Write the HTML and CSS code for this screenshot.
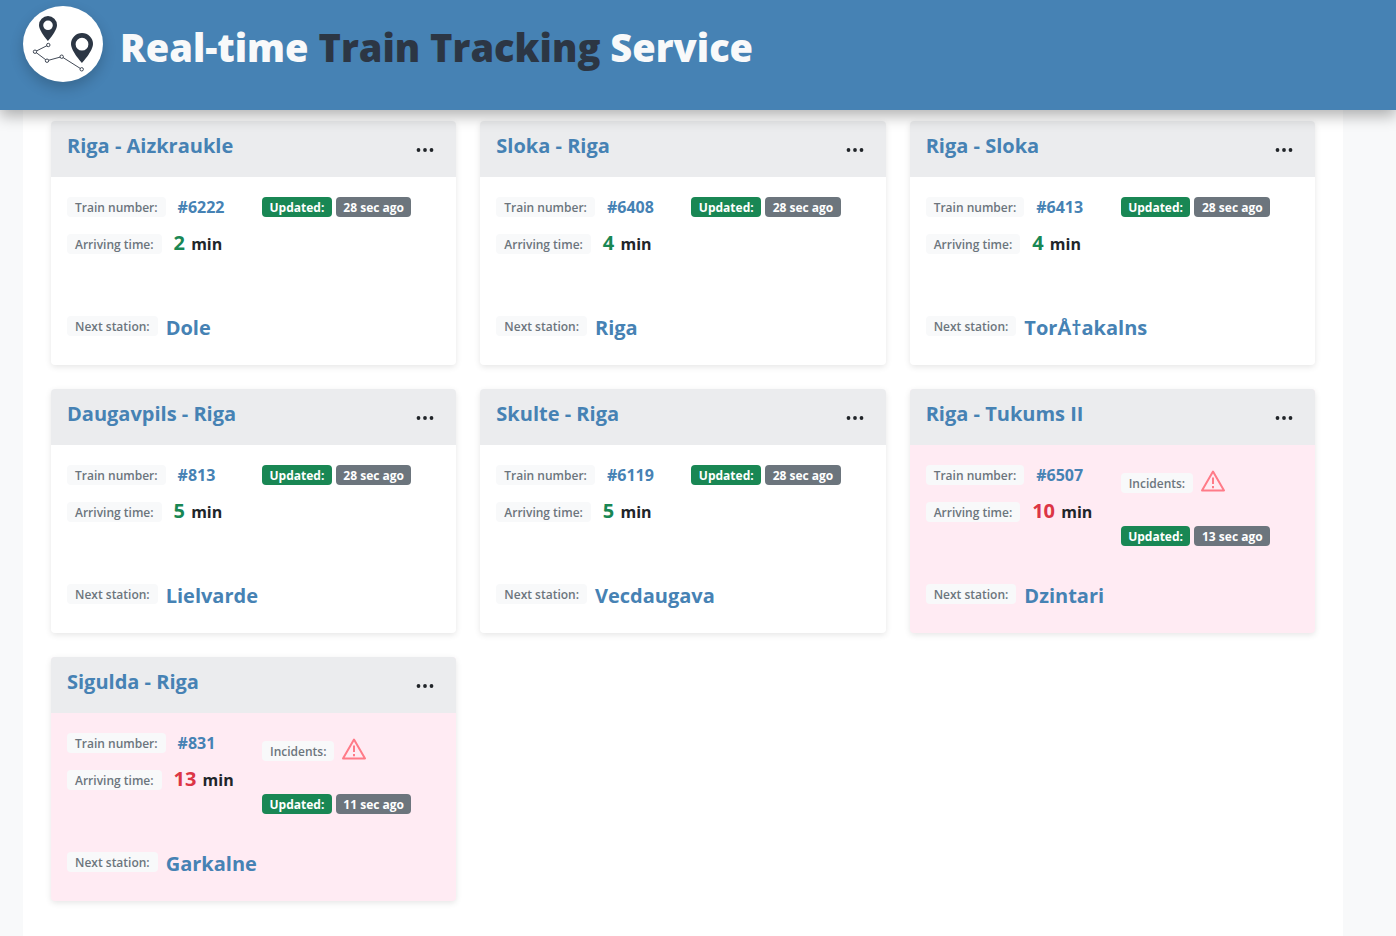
FILE: index.html
```html
<!DOCTYPE html>
<html lang="en">
<head>
    <meta charset="UTF-8">
    <meta name="viewport" content="width=device-width, initial-scale=1.0">
    <title>Real-time Train Tracking Service</title>
    <link rel="stylesheet" href="styles.css">
</head>
<body>

<header class="site-header">
    <div class="logo">
        <svg width="80" height="76" viewBox="0 0 80 76">
            <path class="pin" fill-rule="evenodd" d="M25 10a9 9 0 0 0-9 9c0 6 9 16 9 16s9-10 9-16a9 9 0 0 0-9-9zm0 4.500a4.800 4.800 0 1 1 0 9.600a4.800 4.800 0 0 1 0-9.600z"/>
            <path class="pin" fill-rule="evenodd" d="M59 27a11 11 0 0 0-11 11c0 7 11 19 11 19s11-12 11-19a11 11 0 0 0-11-11zm0 4.800a6.400 6.400 0 1 1 0 12.800a6.400 6.400 0 0 1 0-12.800z"/>
            <polyline class="route" points="25.300,39 12,45.700 24,54.700 38.700,50.700 58.700,63.300"/>
            <circle class="node" cx="25.300" cy="39" r="1.700"/>
            <circle class="node" cx="12" cy="45.700" r="1.700"/>
            <circle class="node" cx="24" cy="54.700" r="1.700"/>
            <circle class="node" cx="38.700" cy="50.700" r="1.700"/>
            <circle class="node" cx="58.700" cy="63.300" r="1.700"/>
        </svg>
    </div>
    <h1 class="site-title">Real-time <span class="title-dark">Train Tracking</span> Service</h1>
</header>

<main class="container">
    <div class="card-grid">

        <section class="card">
            <div class="card-head">
                <h2>Riga - Aizkraukle</h2>
                <svg class="dots" width="18" height="6" viewBox="0 0 18 6"><circle cx="2.500" cy="3" r="1.900"/><circle cx="9" cy="3" r="1.900"/><circle cx="15.500" cy="3" r="1.900"/></svg>
            </div>
            <div class="card-body">
                <div class="info">
                    <div class="info-left">
                        <div class="row"><span class="chip">Train number:</span><span class="train-no">#6222</span></div>
                        <div class="row"><span class="chip">Arriving time:</span><span class="eta"><b class="soon">2</b> min</span></div>
                    </div>
                    <div class="info-right">
                        <div class="updated"><span class="badge green">Updated:</span><span class="badge gray">28 sec ago</span></div>
                    </div>
                </div>
                <div class="next"><span class="chip">Next station:</span><span class="station">Dole</span></div>
            </div>
        </section>

        <section class="card">
            <div class="card-head">
                <h2>Sloka - Riga</h2>
                <svg class="dots" width="18" height="6" viewBox="0 0 18 6"><circle cx="2.500" cy="3" r="1.900"/><circle cx="9" cy="3" r="1.900"/><circle cx="15.500" cy="3" r="1.900"/></svg>
            </div>
            <div class="card-body">
                <div class="info">
                    <div class="info-left">
                        <div class="row"><span class="chip">Train number:</span><span class="train-no">#6408</span></div>
                        <div class="row"><span class="chip">Arriving time:</span><span class="eta"><b class="soon">4</b> min</span></div>
                    </div>
                    <div class="info-right">
                        <div class="updated"><span class="badge green">Updated:</span><span class="badge gray">28 sec ago</span></div>
                    </div>
                </div>
                <div class="next"><span class="chip">Next station:</span><span class="station">Riga</span></div>
            </div>
        </section>

        <section class="card">
            <div class="card-head">
                <h2>Riga - Sloka</h2>
                <svg class="dots" width="18" height="6" viewBox="0 0 18 6"><circle cx="2.500" cy="3" r="1.900"/><circle cx="9" cy="3" r="1.900"/><circle cx="15.500" cy="3" r="1.900"/></svg>
            </div>
            <div class="card-body">
                <div class="info">
                    <div class="info-left">
                        <div class="row"><span class="chip">Train number:</span><span class="train-no">#6413</span></div>
                        <div class="row"><span class="chip">Arriving time:</span><span class="eta"><b class="soon">4</b> min</span></div>
                    </div>
                    <div class="info-right">
                        <div class="updated"><span class="badge green">Updated:</span><span class="badge gray">28 sec ago</span></div>
                    </div>
                </div>
                <div class="next"><span class="chip">Next station:</span><span class="station">TorÅ†akalns</span></div>
            </div>
        </section>

        <section class="card">
            <div class="card-head">
                <h2>Daugavpils - Riga</h2>
                <svg class="dots" width="18" height="6" viewBox="0 0 18 6"><circle cx="2.500" cy="3" r="1.900"/><circle cx="9" cy="3" r="1.900"/><circle cx="15.500" cy="3" r="1.900"/></svg>
            </div>
            <div class="card-body">
                <div class="info">
                    <div class="info-left">
                        <div class="row"><span class="chip">Train number:</span><span class="train-no">#813</span></div>
                        <div class="row"><span class="chip">Arriving time:</span><span class="eta"><b class="soon">5</b> min</span></div>
                    </div>
                    <div class="info-right">
                        <div class="updated"><span class="badge green">Updated:</span><span class="badge gray">28 sec ago</span></div>
                    </div>
                </div>
                <div class="next"><span class="chip">Next station:</span><span class="station">Lielvarde</span></div>
            </div>
        </section>

        <section class="card">
            <div class="card-head">
                <h2>Skulte - Riga</h2>
                <svg class="dots" width="18" height="6" viewBox="0 0 18 6"><circle cx="2.500" cy="3" r="1.900"/><circle cx="9" cy="3" r="1.900"/><circle cx="15.500" cy="3" r="1.900"/></svg>
            </div>
            <div class="card-body">
                <div class="info">
                    <div class="info-left">
                        <div class="row"><span class="chip">Train number:</span><span class="train-no">#6119</span></div>
                        <div class="row"><span class="chip">Arriving time:</span><span class="eta"><b class="soon">5</b> min</span></div>
                    </div>
                    <div class="info-right">
                        <div class="updated"><span class="badge green">Updated:</span><span class="badge gray">28 sec ago</span></div>
                    </div>
                </div>
                <div class="next"><span class="chip">Next station:</span><span class="station">Vecdaugava</span></div>
            </div>
        </section>

        <section class="card incident">
            <div class="card-head">
                <h2>Riga - Tukums II</h2>
                <svg class="dots" width="18" height="6" viewBox="0 0 18 6"><circle cx="2.500" cy="3" r="1.900"/><circle cx="9" cy="3" r="1.900"/><circle cx="15.500" cy="3" r="1.900"/></svg>
            </div>
            <div class="card-body">
                <div class="info">
                    <div class="info-left">
                        <div class="row"><span class="chip">Train number:</span><span class="train-no">#6507</span></div>
                        <div class="row"><span class="chip">Arriving time:</span><span class="eta"><b class="late">10</b> min</span></div>
                    </div>
                    <div class="info-right">
                        <div class="incidents"><span class="chip">Incidents:</span>
                            <svg class="warn" width="24" height="22" viewBox="0 0 24 22"><path d="M12 1.500L23 20.500H1z"/><path d="M12 7.500v6.500M12 16v2.200"/></svg>
                        </div>
                        <div class="updated"><span class="badge green">Updated:</span><span class="badge gray">13 sec ago</span></div>
                    </div>
                </div>
                <div class="next"><span class="chip">Next station:</span><span class="station">Dzintari</span></div>
            </div>
        </section>

        <section class="card incident">
            <div class="card-head">
                <h2>Sigulda - Riga</h2>
                <svg class="dots" width="18" height="6" viewBox="0 0 18 6"><circle cx="2.500" cy="3" r="1.900"/><circle cx="9" cy="3" r="1.900"/><circle cx="15.500" cy="3" r="1.900"/></svg>
            </div>
            <div class="card-body">
                <div class="info">
                    <div class="info-left">
                        <div class="row"><span class="chip">Train number:</span><span class="train-no">#831</span></div>
                        <div class="row"><span class="chip">Arriving time:</span><span class="eta"><b class="late">13</b> min</span></div>
                    </div>
                    <div class="info-right">
                        <div class="incidents"><span class="chip">Incidents:</span>
                            <svg class="warn" width="24" height="22" viewBox="0 0 24 22"><path d="M12 1.500L23 20.500H1z"/><path d="M12 7.500v6.500M12 16v2.200"/></svg>
                        </div>
                        <div class="updated"><span class="badge green">Updated:</span><span class="badge gray">11 sec ago</span></div>
                    </div>
                </div>
                <div class="next"><span class="chip">Next station:</span><span class="station">Garkalne</span></div>
            </div>
        </section>

    </div>
</main>

</body>
</html>
```

FILE: styles.css
```css
* {
    box-sizing: border-box;
}
html, body {
    height: 100%;
}
body {
    margin: 0;
    background-color: #f8f9fa;
    color: #212529;
    font-family: "Open Sans", "Noto Sans", Arial, sans-serif;
    overflow: hidden;
}
.site-header {
    position: relative;
    z-index: 2;
    height: 110px;
    background-color: #4682b4;
    box-shadow: 0 6px 14px rgba(0, 0, 0, 0.3);
    display: flex;
    align-items: flex-start;
    padding: 6px 0 0 23px;
}
.logo {
    width: 80px;
    height: 76px;
    border-radius: 50%;
    background-color: white;
    box-shadow: 0 6px 14px rgba(0, 0, 0, 0.2);
    flex-shrink: 0;
}
.logo svg {
    display: block;
}
.pin {
    fill: #2c3644;
}
.route {
    fill: none;
    stroke: #2c3644;
    stroke-width: 0.9;
}
.node {
    fill: white;
    stroke: #2c3644;
    stroke-width: 0.9;
}
.site-title {
    margin: 14px 0 0 17px;
    font-size: 38px;
    line-height: 54px;
    font-weight: 800;
    color: #f8f9fa;
    white-space: nowrap;
}
.title-dark {
    color: #2c3644;
}
.container {
    width: 1320px;
    margin-left: 23px;
    min-height: calc(100% - 110px);
    background-color: white;
    padding: 11px 28px 0;
}
.card-grid {
    display: grid;
    grid-template-columns: repeat(3, 1fr);
    gap: 24px;
}
.card {
    height: 244px;
    border-radius: 4px;
    background-color: white;
    box-shadow: 0 2px 6px rgba(0, 0, 0, 0.1);
    overflow: hidden;
    display: flex;
    flex-direction: column;
}
.card.incident {
    background-color: #ffebf3;
}
.card-head {
    height: 56px;
    background-color: #ebecee;
    display: flex;
    justify-content: space-between;
    padding: 0 22px 0 16px;
    flex-shrink: 0;
}
.card-head h2 {
    margin: 10px 0 0;
    font-size: 20px;
    line-height: 30px;
    font-weight: 700;
    color: #4682b4;
}
.dots {
    margin-top: 26px;
    fill: #212529;
}
.card-body {
    flex: 1;
    padding: 20px 16px 0;
    display: flex;
    flex-direction: column;
}
.info {
    display: flex;
    height: 119px;
}
.info-left {
    width: 195px;
    flex-shrink: 0;
}
.row {
    display: flex;
    align-items: flex-start;
    gap: 12px;
    height: 37px;
}
.chip {
    display: inline-block;
    height: 20px;
    line-height: 21px;
    padding: 0 8px;
    border-radius: 4px;
    background-color: #f8f9fa;
    color: #6c757d;
    font-size: 12px;
    font-weight: 600;
    white-space: nowrap;
}
.train-no {
    font-size: 16px;
    line-height: 20px;
    font-weight: 700;
    color: #4682b4;
}
.eta {
    font-size: 16px;
    line-height: 18px;
    font-weight: 700;
    color: #212529;
}
.eta b {
    font-size: 20px;
    font-weight: 700;
    margin-right: 2px;
}
.soon {
    color: #198754;
}
.late {
    color: #dc3545;
}
.updated {
    display: flex;
    gap: 4px;
}
.badge {
    height: 20px;
    line-height: 21px;
    padding: 0 7.500px;
    border-radius: 4px;
    color: white;
    font-size: 12px;
    font-weight: 700;
    white-space: nowrap;
}
.badge.green {
    background-color: #198754;
}
.badge.gray {
    background-color: #6c757d;
}
.incidents {
    display: flex;
    align-items: flex-start;
    gap: 8px;
    height: 22px;
    margin-top: 5px;
    margin-bottom: 34px;
}
.incidents .chip {
    margin-top: 3px;
}
.warn {
    fill: none;
    stroke: #ff7b88;
    stroke-width: 2;
    stroke-linejoin: round;
}
.next {
    display: flex;
    align-items: flex-start;
    gap: 8px;
}
.station {
    font-size: 20px;
    line-height: 24px;
    font-weight: 700;
    color: #4682b4;
}
```
